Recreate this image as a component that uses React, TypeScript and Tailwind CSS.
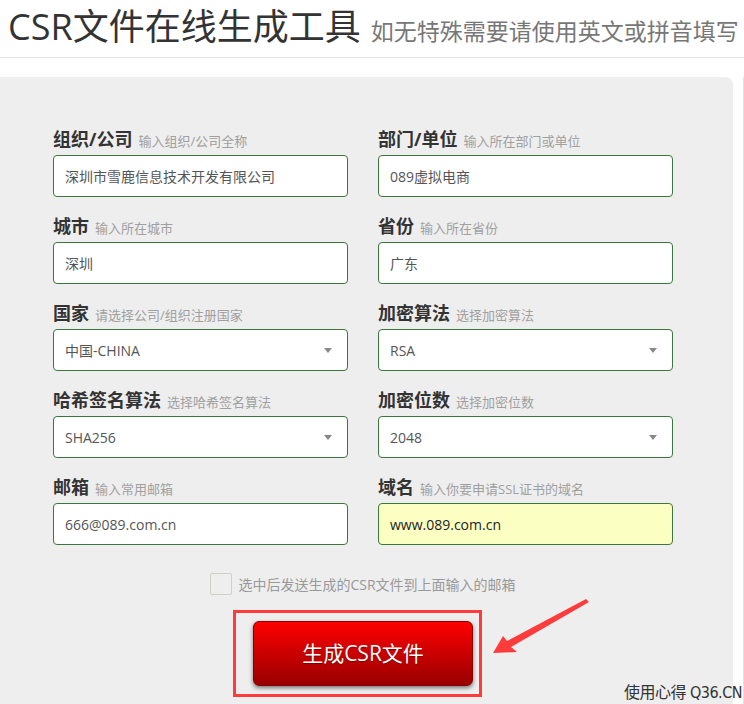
import React from 'react';

type Field = {
  label: string;
  hint: string;
  value: string;
  select?: boolean;
  highlight?: boolean;
};

const fields: Field[] = [
  { label: '组织/公司', hint: '输入组织/公司全称', value: '深圳市雪鹿信息技术开发有限公司' },
  { label: '部门/单位', hint: '输入所在部门或单位', value: '089虚拟电商' },
  { label: '城市', hint: '输入所在城市', value: '深圳' },
  { label: '省份', hint: '输入所在省份', value: '广东' },
  { label: '国家', hint: '请选择公司/组织注册国家', value: '中国-CHINA', select: true },
  { label: '加密算法', hint: '选择加密算法', value: 'RSA', select: true },
  { label: '哈希签名算法', hint: '选择哈希签名算法', value: 'SHA256', select: true },
  { label: '加密位数', hint: '选择加密位数', value: '2048', select: true },
  { label: '邮箱', hint: '输入常用邮箱', value: '666@089.com.cn' },
  { label: '域名', hint: '输入你要申请SSL证书的域名', value: 'www.089.com.cn', highlight: true },
];

function FormField({ field }: { field: Field }) {
  return (
    <div className="flex flex-col">
      <div className="h-[26px] leading-[26px] mb-[3px] whitespace-nowrap">
        <span className="text-[18px] font-bold text-[#333]">{field.label}</span>
        <span className="text-[13px] text-[#a0a0a0] ml-[6px]">{field.hint}</span>
      </div>
      <div
        className={`h-[42px] rounded-[4px] border border-[#3c763d] flex items-center justify-between px-[11px] text-[14px] ${
          field.highlight ? 'bg-[#fbffc2] text-[#222]' : 'bg-white text-[#555]'
        }`}
      >
        <span>{field.value}</span>
        {field.select && (
          <span className="w-0 h-0 border-l-[4px] border-r-[4px] border-t-[5px] border-l-transparent border-r-transparent border-t-[#888] mr-[4px]" />
        )}
      </div>
    </div>
  );
}

export default function App() {
  return (
    <div className="relative w-[744px] h-[704px] overflow-hidden bg-white font-['Open_Sans','Noto_Sans_CJK_SC',sans-serif]">
      <div className="h-[58px] border-b border-[#e5e5e5] pt-[5px] pl-[8px] whitespace-nowrap flex items-baseline">
        <span className="text-[36px] leading-[44px] text-[#333]">CSR文件在线生成工具</span>
        <span className="text-[23px] leading-[30px] text-[#777] ml-[10px]">如无特殊需要请使用英文或拼音填写</span>
      </div>

      <div className="flex mt-[19px]">
        <div className="w-[733px] h-[640px] bg-[#eeeeee] rounded-tr-[8px] pt-[49px] pl-[53px]">
          <div className="grid grid-cols-[295px_295px] gap-x-[30px] gap-y-[16px]">
            {fields.map((f) => (
              <FormField key={f.label} field={f} />
            ))}
          </div>

          <div className="w-[620px] flex items-center justify-center mt-[28px] gap-[6px]">
            <span className="w-[22px] h-[22px] border border-[#d2cec8] rounded-[2px]" />
            <span className="text-[14px] text-[#999]">选中后发送生成的CSR文件到上面输入的邮箱</span>
          </div>

          <div className="w-[620px] flex justify-center mt-[26px]">
            <button className="w-[220px] h-[65px] rounded-[6px] border border-[#8a0000] bg-gradient-to-b from-[#ff0000] to-[#990000] text-white text-[21px] shadow-[0_2px_4px_rgba(0,0,0,0.5)] [text-shadow:0_1px_1px_rgba(0,0,0,0.4)]">
              生成CSR文件
            </button>
          </div>
        </div>
        <div className="ml-[10px] w-px h-[640px] bg-[#e2e2e2]" />
      </div>

      {/* annotation */}
      <div className="absolute left-[233px] top-[610px] w-[249px] h-[87px] border-[3px] border-[#ff3b3b]" />
      <svg className="absolute left-0 top-0" width="744" height="704">
        <polygon
          points="493,653 503,636 507,641 586,599 589,602 511,647 517,652"
          fill="#ff3b3b"
        />
      </svg>

      <div className="absolute right-[2px] bottom-[2px] text-[16px] text-[#333] leading-[18px] tracking-[-0.5px] font-['DejaVu_Sans_Condensed','Noto_Sans_CJK_SC',sans-serif]">
        使用心得 Q36.CN
      </div>
    </div>
  );
}
